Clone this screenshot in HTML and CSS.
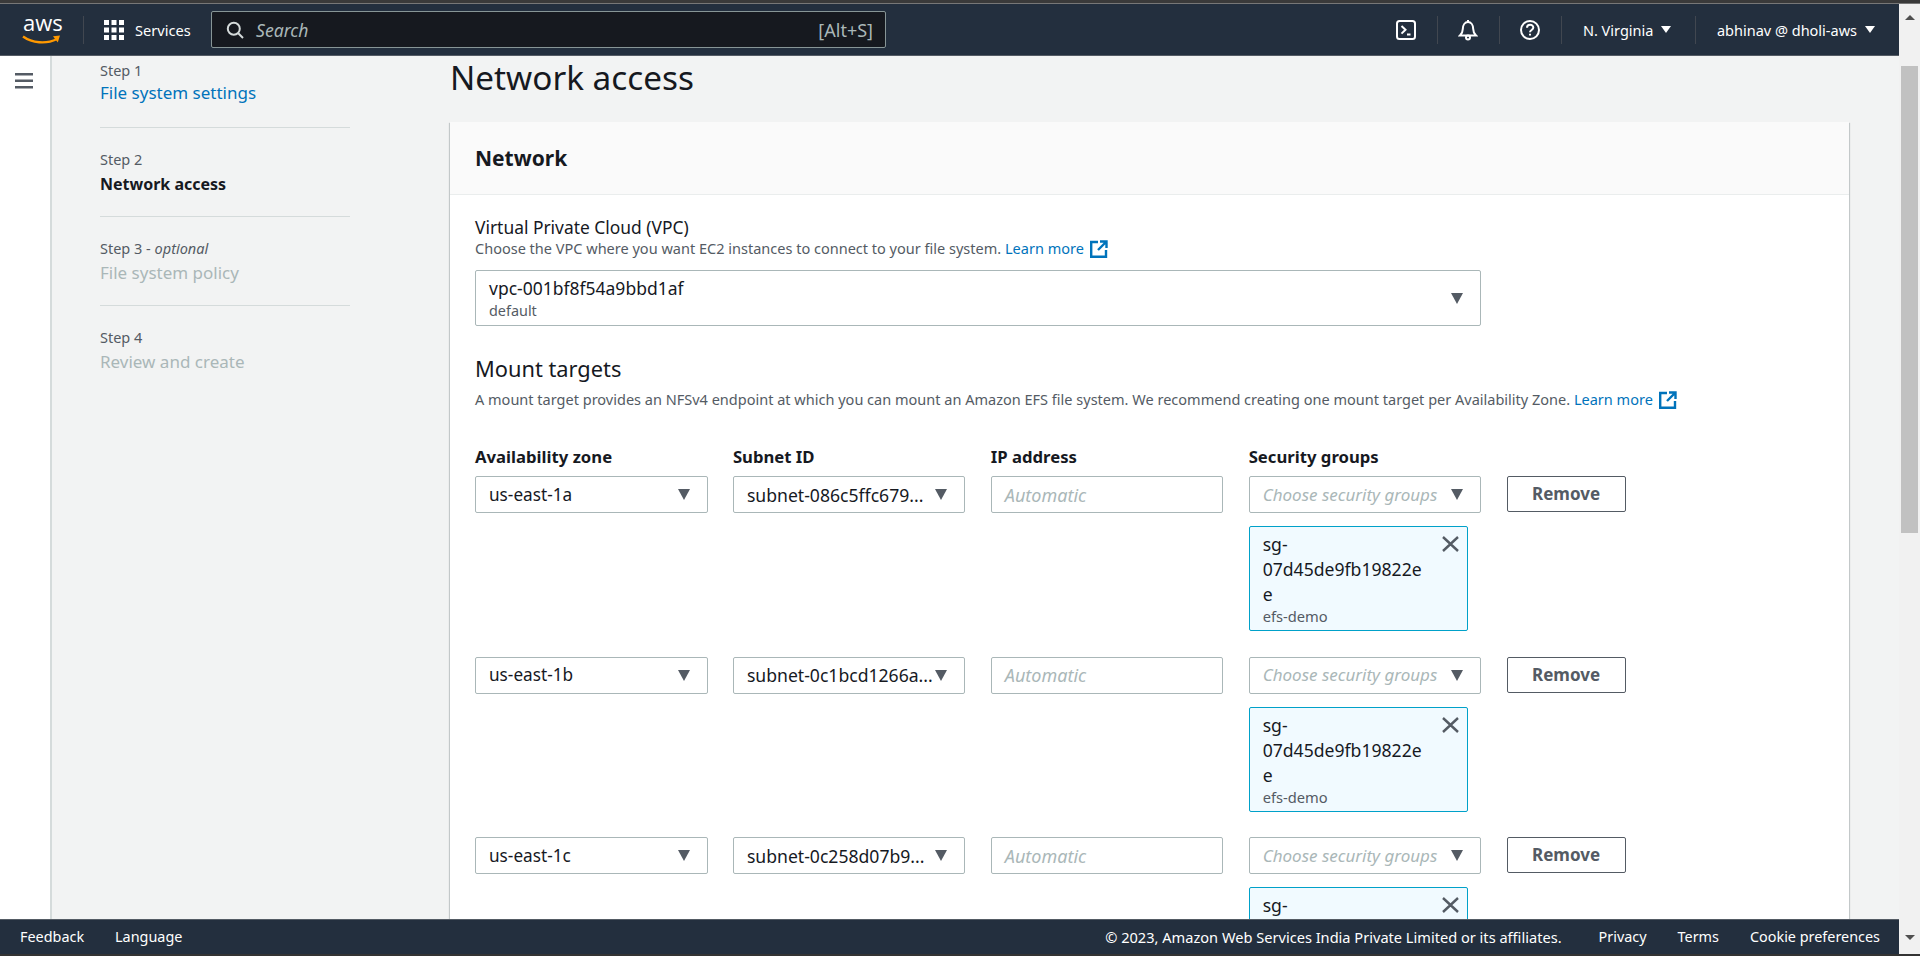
FILE: index.html
```html
<!DOCTYPE html>
<html lang="en">
<head>
<meta charset="utf-8">
<title>Create file system - Network access</title>
<link rel="stylesheet" href="styles.css">
</head>
<body>
<div class="strip-top"></div>
<div class="frame">
  <div class="app">
    <header class="topbar">
      <div class="logo">
        <span class="logo-text">aws</span>
        <svg class="logo-smile" width="39" height="10" viewBox="0 0 39 10"><path d="M1 1.500C10 8 24 9.500 35 4" fill="none" stroke="#f90" stroke-width="2.400"/><path d="M31 1.200l7-.6-2.200 7z" fill="#f90"/></svg>
      </div>
      <span class="vsep sep-logo"></span>
      <svg class="grid-icon" width="20" height="20" viewBox="0 0 20 20" fill="#fff"><rect x="0" y="0" width="5" height="5"/><rect x="7.500" y="0" width="5" height="5"/><rect x="15" y="0" width="5" height="5"/><rect x="0" y="7.500" width="5" height="5"/><rect x="7.500" y="7.500" width="5" height="5"/><rect x="15" y="7.500" width="5" height="5"/><rect x="0" y="15" width="5" height="5"/><rect x="7.500" y="15" width="5" height="5"/><rect x="15" y="15" width="5" height="5"/></svg>
      <span class="services">Services</span>
      <div class="search">
        <svg width="18" height="18" viewBox="0 0 18 18" fill="none" stroke="#d5dbdb" stroke-width="2"><circle cx="7.800" cy="7.800" r="6"/><path d="M12 12l5 5"/></svg>
        <span class="search-ph">Search</span>
        <span class="search-key">[Alt+S]</span>
      </div>
      <div class="top-right">
        <span class="top-ico"><svg width="20" height="22" viewBox="0 0 20 22" fill="none" stroke="#fff" stroke-width="2"><rect x="1" y="2" width="18" height="18" rx="2.500"/><path d="M5.500 7l4 3.800-4 3.800M11 15.500h3.500"/></svg></span>
        <span class="vsep"></span>
        <span class="top-ico"><svg width="20" height="22" viewBox="0 0 20 22" fill="none" stroke="#fff" stroke-width="2"><path d="M2 16.500h16c-2-2-2.800-3-2.800-6.500C15.200 6 13 3 10 3S4.800 6 4.800 10c0 3.500-.8 4.500-2.800 6.500z"/><circle cx="10" cy="18.500" r="2"/><path d="M10 1v2"/></svg></span>
        <span class="vsep"></span>
        <span class="top-ico"><svg width="20" height="22" viewBox="0 0 20 22" fill="none" stroke="#fff" stroke-width="2"><circle cx="10" cy="11" r="9"/><path d="M7 8.800c0-4 6.300-4 6.300-.2 0 2.400-3.300 2.400-3.300 4.700"/><path d="M10 14.800v1.800"/></svg></span>
        <span class="vsep"></span>
        <span class="top-menu region">N. Virginia <i class="tri-white"></i></span>
        <span class="vsep"></span>
        <span class="top-menu user">abhinav @ dholi-aws <i class="tri-white"></i></span>
      </div>
    </header>
    <div class="middle">
      <aside class="rail">
        <svg width="18" height="16" viewBox="0 0 18 16" fill="#545b64"><rect y="0" width="18" height="2.500"/><rect y="6.500" width="18" height="2.500"/><rect y="13" width="18" height="2.500"/></svg>
      </aside>
      <main class="content">
        <nav class="wizard">
          <div class="step">
            <div class="step-no">Step 1</div>
            <a class="step-name link">File system settings</a>
          </div>
          <div class="step">
            <div class="step-no">Step 2</div>
            <div class="step-name current">Network access</div>
          </div>
          <div class="step">
            <div class="step-no">Step 3 - <em>optional</em></div>
            <div class="step-name off">File system policy</div>
          </div>
          <div class="step">
            <div class="step-no">Step 4</div>
            <div class="step-name off">Review and create</div>
          </div>
        </nav>
        <section class="page">
          <h1>Network access</h1>
          <div class="card">
            <div class="card-head">Network</div>
            <div class="card-body">
              <div class="field-label">Virtual Private Cloud (VPC)</div>
              <div class="field-desc">Choose the VPC where you want EC2 instances to connect to your file system. <a class="link">Learn more</a> <svg class="ext" width="18" height="18" viewBox="0 0 18 18" fill="none" stroke="#0073bb" stroke-width="2.400"><path d="M8 2H1.200v14.800H16V10"/><path d="M10 1.500h6.500V8M16 2L8 10"/></svg></div>
              <div class="vpc-select">
                <div>
                  <div class="vpc-id">vpc-001bf8f54a9bbd1af</div>
                  <div class="vpc-sub">default</div>
                </div>
                <i class="tri"></i>
              </div>
              <h2>Mount targets</h2>
              <div class="field-desc mt-desc">A mount target provides an NFSv4 endpoint at which you can mount an Amazon EFS file system. We recommend creating one mount target per Availability Zone. <a class="link">Learn more</a> <svg class="ext" width="18" height="18" viewBox="0 0 18 18" fill="none" stroke="#0073bb" stroke-width="2.400"><path d="M8 2H1.200v14.800H16V10"/><path d="M10 1.500h6.500V8M16 2L8 10"/></svg></div>
              <div class="mt-head">
                <span>Availability zone</span><span>Subnet ID</span><span>IP address</span><span>Security groups</span>
              </div>
              <div class="mt-row">
                <div class="sel"><span>us-east-1a</span><i class="tri"></i></div>
                <div class="sel"><span class="clip">subnet-086c5ffc679...</span><i class="tri"></i></div>
                <div class="inp">Automatic</div>
                <div class="sg">
                  <div class="sel"><span class="ph">Choose security groups</span><i class="tri"></i></div>
                  <div class="token">
                    <div class="token-id">sg-<br>07d45de9fb19822e<br>e</div>
                    <div class="token-name">efs-demo</div>
                    <svg class="token-x" width="17" height="16" viewBox="0 0 17 16" stroke="#545b64" stroke-width="2.400"><path d="M1 1l15 14M16 1L1 15"/></svg>
                  </div>
                </div>
                <div class="btn">Remove</div>
              </div>
              <div class="mt-row">
                <div class="sel"><span>us-east-1b</span><i class="tri"></i></div>
                <div class="sel"><span class="clip">subnet-0c1bcd1266a...</span><i class="tri"></i></div>
                <div class="inp">Automatic</div>
                <div class="sg">
                  <div class="sel"><span class="ph">Choose security groups</span><i class="tri"></i></div>
                  <div class="token">
                    <div class="token-id">sg-<br>07d45de9fb19822e<br>e</div>
                    <div class="token-name">efs-demo</div>
                    <svg class="token-x" width="17" height="16" viewBox="0 0 17 16" stroke="#545b64" stroke-width="2.400"><path d="M1 1l15 14M16 1L1 15"/></svg>
                  </div>
                </div>
                <div class="btn">Remove</div>
              </div>
              <div class="mt-row">
                <div class="sel"><span>us-east-1c</span><i class="tri"></i></div>
                <div class="sel"><span class="clip">subnet-0c258d07b9...</span><i class="tri"></i></div>
                <div class="inp">Automatic</div>
                <div class="sg">
                  <div class="sel"><span class="ph">Choose security groups</span><i class="tri"></i></div>
                  <div class="token">
                    <div class="token-id">sg-<br>07d45de9fb19822e<br>e</div>
                    <div class="token-name">efs-demo</div>
                    <svg class="token-x" width="17" height="16" viewBox="0 0 17 16" stroke="#545b64" stroke-width="2.400"><path d="M1 1l15 14M16 1L1 15"/></svg>
                  </div>
                </div>
                <div class="btn">Remove</div>
              </div>
            </div>
          </div>
        </section>
      </main>
    </div>
    <footer class="footbar">
      <a class="foot-link">Feedback</a>
      <a class="foot-link">Language</a>
      <span class="copy">© 2023, Amazon Web Services India Private Limited or its affiliates.</span>
      <a class="foot-link">Privacy</a>
      <a class="foot-link">Terms</a>
      <a class="foot-link">Cookie preferences</a>
    </footer>
  </div>
  <div class="scrollbar">
    <i class="sb-up"></i>
    <div class="sb-track"><div class="sb-thumb"></div></div>
    <i class="sb-down"></i>
  </div>
</div>
<div class="strip-bottom"></div>
</body>
</html>
```
FILE: styles.css
```css
* { box-sizing: border-box; }
html, body { margin: 0; height: 100%; }
body {
  height: 956px;
  overflow: hidden;
  display: flex;
  flex-direction: column;
  font-family: "Noto Sans", "Open Sans", sans-serif;
  font-size: 14.500px;
  line-height: 22px;
  color: #16191f;
  background: #fff;
}
.strip-top { height: 4px; background: #3a3a3a; border-bottom: 1px solid #777; flex: none; }
.strip-bottom { height: 2px; background: #333; flex: none; }
.frame { flex: 1; display: flex; min-height: 0; }
.app { width: 1899px; display: flex; flex-direction: column; min-height: 0; }

.topbar {
  height: 52px;
  flex: none;
  background: #232f3e;
  border-bottom: 1px solid #545b64;
  display: flex;
  align-items: center;
  padding-left: 22px;
  color: #fff;
}
.logo { width: 40px; display: flex; flex-direction: column; align-items: flex-start; }
.logo-text { font-size: 22px; line-height: 15px; letter-spacing: 0; padding-left: 1px; font-family: "Open Sans", sans-serif; height: 20px; }
.logo-smile { display: block; }
.vsep { width: 1px; height: 28px; background: #414750; flex: none; }
.sep-logo { margin-left: 21px; margin-right: 20px; }
.grid-icon { flex: none; }
.services { margin-left: 11px; font-size: 14.600px; width: 55px; }
.search {
  margin-left: 21px;
  width: 675px;
  height: 37px;
  background: #16191f;
  border: 1px solid #879596;
  border-radius: 2px;
  display: flex;
  align-items: center;
  padding: 0 12px 0 14px;
}
.search-ph { margin-left: 12px; font-style: italic; color: #aab7b8; font-size: 17.600px; }
.search-key { margin-left: auto; color: #aab7b8; font-size: 18px; }
.top-right { margin-left: auto; display: flex; align-items: center; padding-right: 24px; }
.top-ico { width: 61px; display: flex; justify-content: center; }
.top-menu { display: flex; align-items: center; white-space: nowrap; font-size: 14.500px; }
.region { padding-left: 21px; width: 133px; }
.user { padding-left: 21px; }
.tri-white { width: 0; height: 0; margin-left: 8px; border-left: 5px solid transparent; border-right: 5px solid transparent; border-top: 7px solid #fff; display: block; }

.middle { flex: 1; display: flex; min-height: 0; overflow: hidden; background: #f2f3f3; }
.rail { width: 52px; flex: none; background: #fff; border-right: 2px solid #d5dbdb; display: flex; justify-content: center; padding-top: 17px; padding-right: 2px; }
.rail svg { display: block; }
.content { flex: 1; display: flex; align-items: flex-start; min-width: 0; }

.wizard { width: 250px; margin-left: 48px; flex: none; padding-top: 3px; }
.step { border-bottom: 1px solid #d5dbdb; height: 69px; margin-bottom: 20px; }
.step:last-child { border-bottom: 0; }
.step-no { font-size: 14.500px; line-height: 22px; color: #545b64; }
.step-no em { font-style: italic; }
.step-name { font-size: 17px; line-height: 24px; margin-top: 2px; }
.link { color: #0073bb; }
.current { font-weight: 700; font-size: 16px; color: #16191f; }
.off { color: #aab7b8; }

.page { margin-left: 100px; width: 1399px; flex: none; }
h1 { margin: 0; font-size: 33.300px; line-height: 42px; font-weight: 400; height: 66px; }
.card { background: #fff; box-shadow: 0 1px 1px rgba(0,28,36,.3), 1px 1px 1px rgba(0,28,36,.15), -1px 1px 1px rgba(0,28,36,.15); }
.card-head { height: 73px; background: #fafafa; border-bottom: 1px solid #eaeded; padding: 24px 25px 0; font-size: 21px; line-height: 24px; font-weight: 700; }
.card-body { padding: 21px 25px 0; }
.field-label { font-size: 17.400px; line-height: 22px; }
.field-desc { font-size: 14.530px; line-height: 21px; color: #545b64; }
.mt-desc { margin-top: 5px; line-height: 22px; }
.ext { vertical-align: -4px; margin-left: 2px; }
.vpc-select {
  margin-top: 11px;
  width: 1006px;
  height: 56px;
  border: 1px solid #aab7b8;
  border-radius: 2px;
  padding: 0 17px 0 13px;
  display: flex;
  align-items: center;
  justify-content: space-between;
}
.vpc-id { font-size: 17.500px; line-height: 22px; }
.vpc-sub { font-size: 14.400px; line-height: 18px; margin-top: 3px; color: #545b64; }
h2 { margin: 29px 0 0; font-size: 21.800px; line-height: 28px; font-weight: 400; }
.mt-head {
  margin-top: 36px;
  display: grid;
  grid-template-columns: repeat(4, 232.500px);
  column-gap: 25.400px;
  font-weight: 700;
  font-size: 16.700px;
  line-height: 22px;
}
.mt-row {
  display: grid;
  grid-template-columns: repeat(4, 232.500px) 119px;
  column-gap: 25.400px;
  align-items: start;
  margin-top: 8px;
  height: 172.500px;
}
.sel, .inp {
  height: 37px;
  border: 1px solid #aab7b8;
  border-radius: 2px;
  display: flex;
  align-items: center;
  justify-content: space-between;
  padding: 0 13px;
  font-size: 17.200px;
}
.sel { padding-right: 17px; }
.clip { white-space: nowrap; overflow: hidden; font-size: 17.600px; }
.ph { font-style: italic; color: #aab7b8; white-space: nowrap; font-size: 17px; }
.inp { font-style: italic; color: #aab7b8; font-size: 18px; }
.tri { width: 0; height: 0; border-left: 6.500px solid transparent; border-right: 6.500px solid transparent; border-top: 11px solid #545b64; display: block; flex: none; }
.token {
  position: relative;
  margin-top: 13px;
  width: 219px;
  height: 105px;
  background: #f1faff;
  border: 1px solid #00a1c9;
  border-radius: 2px;
  padding: 5px 13px 0;
}
.token-id { font-size: 17.600px; line-height: 25px; }
.token-name { font-size: 14.700px; line-height: 18px; color: #545b64; }
.token-x { position: absolute; top: 9px; right: 8px; }
.btn {
  height: 36px;
  border: 1px solid #545b64;
  border-radius: 2px;
  display: flex;
  align-items: center;
  justify-content: center;
  font-weight: 700;
  font-size: 17px;
  color: #545b64;
}

.footbar {
  height: 35px;
  flex: none;
  background: #232f3e;
  border-top: 1px solid #545b64;
  color: #fff;
  display: flex;
  align-items: center;
  padding: 0 19px 0 20px;
  gap: 31px;
  font-size: 14.400px;
}
.copy { margin-left: auto; margin-right: 6px; font-size: 14.600px; }

.scrollbar { width: 21px; flex: none; background: #f1f1f1; display: flex; flex-direction: column; align-items: center; }
.sb-up { margin-top: 11px; width: 0; height: 0; border-left: 5px solid transparent; border-right: 5px solid transparent; border-bottom: 5px solid #505050; display: block; }
.sb-track { flex: 1; width: 100%; padding: 46px 2px 0 2px; }
.sb-thumb { height: 467px; background: #c1c1c1; }
.sb-down { margin-bottom: 14px; width: 0; height: 0; border-left: 5px solid transparent; border-right: 5px solid transparent; border-top: 5px solid #505050; display: block; }
```
